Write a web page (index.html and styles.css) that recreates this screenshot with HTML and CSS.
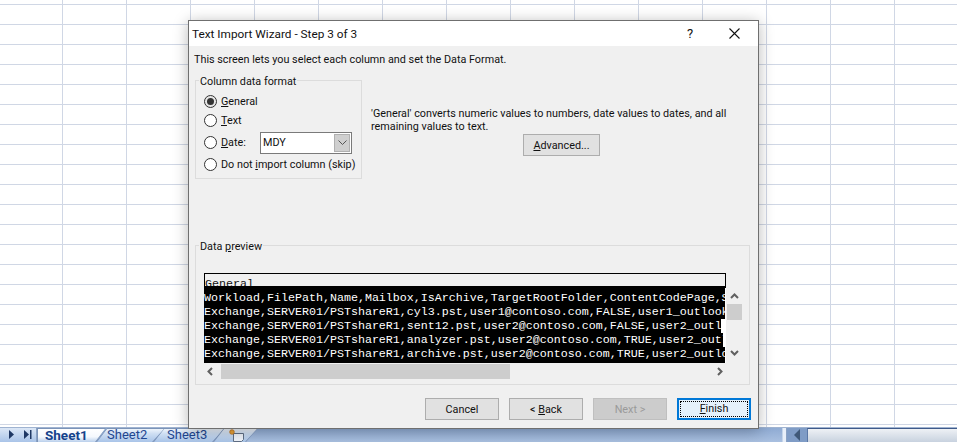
FILE: index.html
```html
<!DOCTYPE html>
<html lang="en">
<head>
<meta charset="utf-8">
<title>Text Import Wizard</title>
<link rel="stylesheet" href="styles.css">
</head>
<body>
<div class="app">
  <div class="sheet"></div>
  <div class="statusbar">
    <div class="nav">
      <svg class="nav-icon" width="34" height="13" viewBox="0 0 34 13"><path d="M8 2l5 4.500-5 4.500z" fill="#1f3864"/><path d="M23 2l5 4.500-5 4.500z" fill="#1f3864"/><path d="M29 2h1.500v9H29z" fill="#1f3864"/></svg>
    </div>
    <div class="tabs">
      <div class="tab tab-active"><span class="tab-label">Sheet1</span></div>
      <div class="tab tab-2"><span class="tab-label">Sheet2</span></div>
      <div class="tab tab-3"><span class="tab-label">Sheet3</span></div>
      <div class="tab tab-new">
        <svg class="new-icon" width="16" height="13" viewBox="0 0 16 13"><path d="M4.500 4.500h10v6l-2 2h-8z" fill="#eef3fa" stroke="#5f6f85"/><circle cx="3" cy="3" r="2.300" fill="#e8a33a" stroke="#b86a10" stroke-width=".7"/></svg>
      </div>
    </div>
    <div class="spacer"></div>
    <div class="split"></div>
    <div class="scroll-left"><svg width="8" height="12" viewBox="0 0 8 12"><path d="M7 0v12L1 6z" fill="#3f5878"/></svg></div>
    <div class="scroll-track"></div>
  </div>
</div>

<div class="dialog">
  <div class="titlebar">
    <span class="title">Text Import Wizard - Step 3 of 3</span>
    <span class="help">?</span>
    <svg class="close" width="11" height="11" viewBox="0 0 11 11"><path d="M.5.500l10 10M10.500.500l-10 10" stroke="#111" stroke-width="1.100" fill="none"/></svg>
  </div>
  <div class="body">
    <p class="intro">This screen lets you select each column and set the Data Format.</p>
    <div class="top">
      <fieldset class="group format">
        <legend>Column data format</legend>
        <div class="radio-row row-general"><span class="radio radio-on"></span><span><u>G</u>eneral</span></div>
        <div class="radio-row row-text"><span class="radio"></span><span><u>T</u>ext</span></div>
        <div class="radio-row row-date">
          <span class="radio"></span><span class="date-label"><u>D</u>ate:</span>
          <div class="select"><span class="select-value">MDY</span><span class="select-btn"><svg width="9" height="6" viewBox="0 0 9 6"><path d="M.5.500l4 4 4-4" stroke="#555" fill="none"/></svg></span></div>
        </div>
        <div class="radio-row row-skip"><span class="radio"></span><span>Do not <u>i</u>mport column (skip)</span></div>
      </fieldset>
      <div class="desc">
        <p class="desc-text">'General' converts numeric values to numbers, date values to dates, and all remaining values to text.</p>
        <button class="btn btn-advanced"><u>A</u>dvanced...</button>
      </div>
    </div>
    <fieldset class="group preview">
      <legend>Data <u>p</u>review</legend>
      <div class="hdr">General</div>
      <div class="grid-row">
        <div class="rows">
          <div class="line line-long">Workload,FilePath,Name,Mailbox,IsArchive,TargetRootFolder,ContentCodePage,SearchName</div>
          <div class="line line-long">Exchange,SERVER01/PSTshareR1,cyl3.pst,user1@contoso.com,FALSE,user1_outlook,en</div>
          <div class="line line-short">Exchange,SERVER01/PSTshareR1,sent12.pst,user2@contoso.com,FALSE,user2_outlook,en</div>
          <div class="line line-mid">Exchange,SERVER01/PSTshareR1,analyzer.pst,user2@contoso.com,TRUE,user2_outlook,en</div>
          <div class="line line-long">Exchange,SERVER01/PSTshareR1,archive.pst,user2@contoso.com,TRUE,user2_outlook,en</div>
        </div>
        <div class="vbar">
          <svg class="arrow" width="9" height="6" viewBox="0 0 9 6"><path d="M1 5l3.500-3.500L8 5" stroke="#606060" stroke-width="2" fill="none"/></svg>
          <div class="vthumb"></div>
          <svg class="arrow arrow-down" width="9" height="6" viewBox="0 0 9 6"><path d="M1 1l3.500 3.500L8 1" stroke="#606060" stroke-width="2" fill="none"/></svg>
        </div>
      </div>
      <div class="hbar">
        <svg class="arrow-left" width="6" height="9" viewBox="0 0 6 9"><path d="M5 1L1.500 4.500 5 8" stroke="#606060" stroke-width="2" fill="none"/></svg>
        <div class="hthumb"></div>
        <svg class="arrow-right" width="6" height="9" viewBox="0 0 6 9"><path d="M1 1l3.500 3.500L1 8" stroke="#606060" stroke-width="2" fill="none"/></svg>
      </div>
    </fieldset>
    <div class="actions">
      <button class="btn btn-action">Cancel</button>
      <button class="btn btn-action">&lt; <u>B</u>ack</button>
      <button class="btn btn-action btn-disabled" disabled>Next &gt;</button>
      <button class="btn btn-action btn-default"><span class="focus"><u>F</u>inish</span></button>
    </div>
  </div>
</div>
</body>
</html>
```

FILE: styles.css
```css
* { box-sizing: border-box; }
html, body { margin: 0; padding: 0; height: 100%; overflow: hidden; }
body { font-family: Roboto, "Noto Sans", sans-serif; font-size: 10.8px; color: #111; background: #fff; }

.app { display: flex; flex-direction: column; height: 442px; }
.sheet {
  flex: 1;
  background-color: #fff;
  background-image:
    linear-gradient(to right, #d0d7e5 1px, transparent 1px),
    linear-gradient(to bottom, #d0d7e5 1px, transparent 1px);
  background-size: 64px 100%, 100% 20px;
  background-position: 62px 0, 0 4px;
}

.statusbar {
  height: 15px;
  display: flex;
  background: linear-gradient(to bottom, #8fabd3, #a9c0e0);
  border-top: 1px solid #9fb3d1;
}
.nav { width: 37px; background: linear-gradient(to bottom, #dbe7f6, #a9c4e8); border-right: 1px solid #8aa2c4; }
.nav-icon { display: block; margin-left: 1px; }
.tabs { display: flex; }
.tab {
  position: relative;
  height: 14px;
  width: 69px;
  margin-left: -12px;
  background: #7b93b8;
  clip-path: polygon(0 100%, 11px 0, 100% 0, calc(100% - 12px) 100%);
  color: #1f4690;
  font-size: 13px;
  line-height: 14px;
}
.tab::before {
  content: "";
  position: absolute;
  inset: 1px 1px 0 1px;
  background: linear-gradient(to bottom, #eef4fb 0%, #cfdff3 35%, #a9c4e8 100%);
  clip-path: polygon(0 100%, 10px 0, 100% 0, calc(100% - 12px) 100%);
}
.tab-label { position: relative; }
.tab-active {
  margin-left: 0;
  z-index: 2;
  clip-path: polygon(0 0, 100% 0, calc(100% - 10px) 100%, 0 100%);
  padding-left: 8px;
  color: #15428b;
  font-weight: 700;
  font-size: 13.500px;
}
.tab-active::before {
  clip-path: polygon(0 0, 100% 0, calc(100% - 10px) 100%, 0 100%);
  background: linear-gradient(to bottom, #fff 0%, #f4f8fd 60%, #b9cfeb 100%);
}
.tab-2 { margin-left: -10px; padding-left: 11px; z-index: 1; }
.tab-3 { width: 72px; padding-left: 14px; }
.tab-new { width: 45px; padding-left: 16px; }
.new-icon { position: relative; display: block; margin-top: 1px; }
.spacer { flex: 1; }
.split { width: 5px; background: #e8eff9; border-left: 1px solid #c5d5ea; border-right: 1px solid #8aa2c4; }
.scroll-left { width: 20px; background: #7f9cc6; display: flex; align-items: center; justify-content: center; }
.scroll-track { width: 150px; background: linear-gradient(to bottom, #eef1f5, #c8d2df); border-top: 1px solid #3f5a8a; border-left: 1px solid #5b78a6; }

.dialog {
  position: absolute;
  left: 188px;
  top: 20px;
  width: 571px;
  height: 409px;
  background: #f0f0f0;
  border: 1px solid #6f6f6f;
  box-shadow: 0 2px 14px rgba(0, 0, 0, .28);
}
.titlebar { height: 25px; background: #fff; display: flex; align-items: center; padding-left: 3px; }
.title { font-size: 11.800px; flex: 1; }
.help { font-size: 13px; width: 42px; }
.close { margin-right: 18px; }

.body { display: flex; flex-direction: column; padding: 0 7px 0 6px; }
.intro { margin: 6px 0 0 -1px; height: 16px; line-height: 16px; }
.top { display: flex; height: 170px; }

.group { margin: 0; border: 1px solid #dcdcdc; min-width: 0; }
.group legend { padding: 2px 1px 0; margin-left: -5px; line-height: 13px; }

.format { width: 167px; height: 106px; margin-top: 5px; padding: 0 0 0 8px; }
.radio-row { display: flex; align-items: center; white-space: nowrap; }
.row-general { height: 19px; margin-top: 4px; }
.row-text { height: 19px; }
.row-date { height: 25px; }
.row-skip { height: 19px; }
.radio {
  width: 13px;
  height: 13px;
  border: 1px solid #333;
  border-radius: 50%;
  background: #fff;
  margin-right: 4px;
  flex: none;
  display: flex;
  align-items: center;
  justify-content: center;
}
.radio-on { background: #e6e6e6; }
.radio-on::after { content: ""; width: 7px; height: 7px; border-radius: 50%; background: #333; }
.date-label { width: 39px; }
.select { width: 92px; height: 22px; border: 1px solid #7a7a7a; background: #fff; display: flex; }
.select-value { flex: 1; padding-left: 2px; line-height: 20px; }
.select-btn { width: 16px; background: #cfcfcf; border: 1px solid #b0b0b0; margin: 1px; display: flex; align-items: center; justify-content: center; }

.desc { margin-left: 9px; width: 380px; }
.desc-text { margin: 39px 0 0; line-height: 13px; }
.btn {
  font: inherit;
  color: #111;
  background: #e1e1e1;
  border: 1px solid #adadad;
  padding: 0;
  border-radius: 0;
}
.btn-advanced { display: block; width: 77px; height: 22px; margin: 1px 0 0 152px; }

.preview { width: 555px; height: 147px; padding: 20px 0 0 8px; }
.hdr {
  width: 522px;
  height: 15px;
  border: 1px solid #000;
  border-bottom-width: 2px;
  font: 11.67px/21px "Liberation Mono", monospace;
  text-decoration: underline;
  overflow: hidden;
  background: #f0f0f0;
}
.grid-row { display: flex; height: 75px; }
.rows { width: 522px; height: 75px; background: #fff; }
.line {
  height: 14px;
  line-height: 14px;
  background: #000;
  color: #fff;
  font-family: "Liberation Mono", monospace;
  font-size: 11.67px;
  white-space: pre;
  overflow: hidden;
}
.line:first-child { height: 17px; padding-top: 3px; }
.line:last-child { height: 16px; }
.line-long { width: 521px; }
.line-mid { width: 519px; }
.line-short { width: 517px; }
.vbar { width: 17px; display: flex; flex-direction: column; align-items: center; }
.arrow { margin-top: 5px; flex: none; }
.vthumb { width: 15px; height: 16px; background: #cdcdcd; margin-top: 5px; flex: none; }
.arrow-down { margin-top: 30px; }
.hbar { width: 522px; height: 15px; display: flex; align-items: center; margin-top: 1px; }
.arrow-left { margin-left: 3px; flex: none; }
.hthumb { width: 289px; height: 15px; background: #cdcdcd; margin-left: 8px; flex: none; }
.arrow-right { margin-left: 207px; flex: none; }

.actions { display: flex; justify-content: flex-end; gap: 10px; margin-top: 13px; }
.btn-action { width: 74px; height: 22px; }
.btn-disabled { background: #ccc; border-color: #bfbfbf; color: #9a9a9a; }
.btn-default { background: #e5f1fb; border: 1px solid #0078d7; box-shadow: inset 0 0 0 1px #0078d7; padding: 2px; }
.focus { display: block; height: 100%; border: 1px dotted #000; line-height: 14px; }
```
